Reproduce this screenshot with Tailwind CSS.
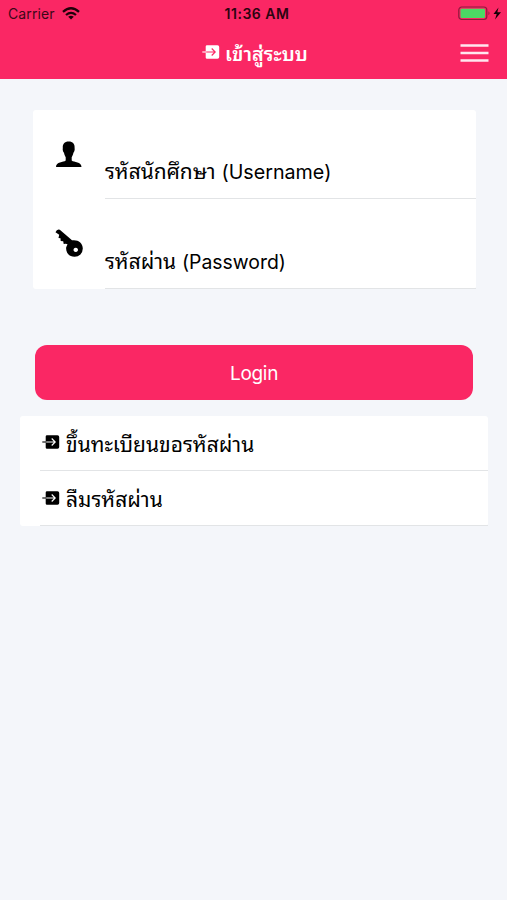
<!DOCTYPE html>
<html lang="th">
<head>
<meta charset="utf-8">
<title>เข้าสู่ระบบ</title>
<script src="https://cdn.jsdelivr.net/npm/@tailwindcss/browser@4"></script>
</head>
<body class="w-[507px] h-[900px] overflow-hidden bg-[#f4f6fa] font-[Inter,'Noto_Sans_Thai_Looped',Loma,Garuda,Waree,'Noto_Sans_Thai','Noto_Sans',sans-serif] text-black">
<svg class="hidden">
  <symbol id="enter" viewBox="0 0 18 14">
    <path fill-rule="evenodd" fill="currentColor" d="M5 .3H15.500a1.700 1.700 0 0 1 1.700 1.700v10a1.700 1.700 0 0 1-1.700 1.700H5a1.300 1.300 0 0 1-1.300-1.300V7.600H11.800L9.300 10.100l.8.8L14 7 10.100 3.100l-.8.8 2.500 2.500H3.700V1.600A1.300 1.300 0 0 1 5 .3Z"/>
    <path d="M.3 7h4" stroke="currentColor" stroke-width="1.100"/>
  </symbol>
</svg>
<header class="h-[79px] bg-[#fa2764]">
  <div class="h-7 grid grid-cols-3 items-center pl-2 pr-[5px] text-[#3c0718]">
    <div class="flex items-center gap-[7px] -mt-px">
      <span class="text-[14px] tracking-[0.1px]">Carrier</span>
      <svg class="w-[18px] h-[13px]" viewBox="0 0 18 13" fill="none" stroke="#200009" stroke-width="2.300"><path d="M1 4.800Q9-2.200 17 4.800M4 8Q9 3.700 14 8"/><path d="M9 12.600 6.200 9.800Q9 7.500 11.800 9.800Z" fill="#200009" stroke="none"/></svg>
    </div>
    <span class="text-center text-[14px] tracking-[0.5px] font-semibold whitespace-nowrap text-[#2b0410] pl-[4px] -mt-px">11:36 AM</span>
    <svg class="justify-self-end w-[44px] h-[15px] -mt-px" viewBox="0 0 44 15"><rect x=".8" y="1" width="28" height="12.500" rx="3" fill="none" stroke="#8c1b3c" stroke-width="1.200"/><rect x="2.500" y="2.700" width="24.500" height="9.200" rx="1" fill="#4cd964"/><path d="M30.500 5.200q2 2 0 4z" fill="#8c1b3c"/><path d="M40.500 1.500 35.500 8h3.200L37 13.500 43 6.300h-3.700Z" fill="#130006"/></svg>
  </div>
  <div class="h-[50px] flex items-center pl-[202px] pr-[18px] text-white">
    <svg class="w-[18px] h-[14px] mb-[3px]"><use href="#enter"/></svg>
    <h1 class="ml-[5px] mt-[2px] text-[19.800px] leading-[30px] font-semibold whitespace-nowrap">เข้าสู่ระบบ</h1>
    <svg class="ml-auto w-[29px] h-[20px]" viewBox="0 0 29 20" stroke="#ffe6ee" stroke-width="2.400"><path d="M.5 2.500h28M.5 10h28M.5 17.500h28"/></svg>
  </div>
</header>
<main>
  <form class="mt-[31px] ml-[33px] w-[443px] h-[179px] bg-white rounded-[3px] flex flex-col">
    <label class="h-[89px] flex">
      <span class="w-[72px] pl-[22px] pt-[30px]"><svg class="w-[27px] h-[28px]" viewBox="0 0 27 28"><path d="M13.700 1.500C9.500 1.500 7.500 4 7.800 8c-.4 2 .3 3.800 1.200 4.800.4 2 1 3.300 1.700 4.500v3.200C8.500 22.500 1 21.500 1 27h25.500c0-5.500-7.500-4.500-9.800-6.500v-3.200c.7-1.200 1.300-2.500 1.700-4.500.9-1 1.600-2.800 1.200-4.800.3-4-1.700-6.500-5.900-6.500Z"/></svg></span>
      <span class="flex-1 border-b border-[#e2e4e6] pt-[47px] leading-[30px] whitespace-nowrap"><span class="text-[20.900px]">รหัสนักศึกษา</span><span class="text-[19.700px] ml-[6px]">(Username)</span></span>
    </label>
    <label class="h-[90px] flex">
      <span class="w-[72px] pl-[22px] pt-[30px]"><svg class="w-[28px] h-[29px]" viewBox="0 0 28 29"><path fill-rule="evenodd" d="M.5 3.200Q2-.3 4.800.8L17 11.300C23 10.300 27.800 14 27.800 19.500a8.200 8.200 0 0 1-8.300 8.300c-5.600 0-9-4.500-8.300-9.600L12.500 15.300 10.800 14.700 8.700 15 8.200 12.300 5.700 12 5.500 9.200 3.500 9 4.200 5.800Z M20.700 18.700a2.200 2.200 0 1 0 .1 0Z"/></svg></span>
      <span class="flex-1 border-b border-[#e2e4e6] pt-[48px] leading-[30px] whitespace-nowrap"><span class="text-[20.900px]">รหัสผ่าน</span><span class="text-[19.400px] ml-[6px]">(Password)</span></span>
    </label>
  </form>
  <button class="block mt-[56px] ml-[35px] w-[438px] h-[55px] rounded-[12px] bg-[#fa2764] text-white text-[19px] tracking-[-0.3px] pt-[3px]">Login</button>
  <nav class="mt-4 ml-[20px] w-[468px] h-[110px] bg-white rounded-[3px] pl-5">
    <a class="h-[55px] flex items-center border-b border-[#e2e4e6] pl-[2px]"><svg class="w-[18px] h-[14px] mb-[3px]"><use href="#enter"/></svg><span class="ml-[6px] mt-[4px] text-[21px] leading-[30px] whitespace-nowrap">ขึ้นทะเบียนขอรหัสผ่าน</span></a>
    <a class="h-[55px] flex items-center border-b border-[#e2e4e6] pl-[2px]"><svg class="w-[18px] h-[14px] mb-px"><use href="#enter"/></svg><span class="ml-[6px] mt-[4px] text-[21px] leading-[30px] whitespace-nowrap">ลืมรหัสผ่าน</span></a>
  </nav>
</main>
</body>
</html>
